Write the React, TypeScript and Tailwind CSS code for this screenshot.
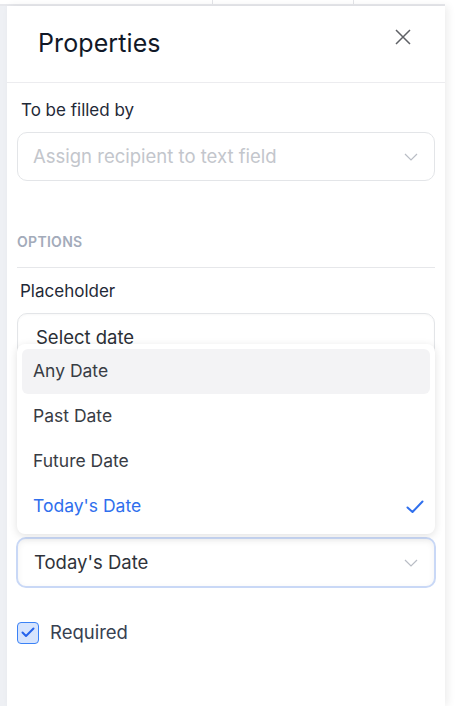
import { useState } from "react";

const font = { fontFamily: "Inter, 'Noto Sans', sans-serif" };

function Chevron() {
  return (
    <svg width="14" height="8" viewBox="0 0 14 8" fill="none">
      <polyline points="1,1 7,7 13,1" stroke="#b9bdc5" strokeWidth="1.2" />
    </svg>
  );
}

const options = ["Any Date", "Past Date", "Future Date", "Today's Date"];

export default function App() {
  const [selected] = useState("Today's Date");

  return (
    <div className="w-[460px] h-[706px] bg-white overflow-hidden flex flex-col" style={font}>
      <div className="h-[4px] w-[445px] flex">
        <div className="w-[213px] border-r border-[#e3e4e8]" />
        <div className="w-[141px] border-r border-[#e3e4e8]" />
      </div>
      <div className="h-[2px] w-[445px] bg-[#e7e8ec]" />
      <div className="flex flex-1">
        <div className="w-[7px] bg-[#eef0f4]" />
        <div className="w-[438px] bg-white shadow-[3px_0_8px_rgba(0,0,0,0.07)] flex flex-col">
          <div className="h-[77px] border-b border-[#ececef] flex items-center justify-between pl-[31px] pr-[34px]">
            <h2 className="text-[25px] text-[#111827] tracking-[0.1px]">Properties</h2>
            <svg width="16" height="16" viewBox="0 0 16 16" className="-mt-[14px]">
              <path d="M1 1L15 15M15 1L1 15" stroke="#5f6166" strokeWidth="1.5" />
            </svg>
          </div>

          <div className="px-[10px] pt-[15px] flex flex-col">
            <label className="pl-[4px] text-[17px] leading-[24px] text-[#1f2937]">To be filled by</label>
            <div className="mt-[10px] h-[49px] rounded-[10px] border border-[#e3e5e8] flex items-center justify-between pl-[15px] pr-[16px]">
              <span className="text-[18.5px] text-[#c3c6cc]">Assign recipient to text field</span>
              <Chevron />
            </div>

            <div className="mt-[51px] text-[14px] leading-[20px] font-semibold text-[#a3abba] tracking-[0.3px]">OPTIONS</div>
            <div className="mt-[15px] border-t border-[#e6e7ea]" />

            <label className="mt-[11px] pl-[3px] text-[17px] leading-[24px] text-[#1f2937]">Placeholder</label>
            <div className="relative mt-[10px]">
              <div className="h-[50px] rounded-[10px] border border-[#e3e5e8] flex items-start pl-[18px] pt-[10px] shadow-[inset_0_1px_2px_rgba(0,0,0,0.03)]">
                <span className="text-[18.5px] text-[#2b2f36]">Select date</span>
              </div>
              <ul className="absolute left-0 right-0 top-[31px] z-10 bg-white rounded-[8px] p-[5px] shadow-[0_2px_8px_rgba(0,0,0,0.12)]">
                {options.map((o, i) => {
                  const active = o === selected;
                  return (
                    <li
                      key={o}
                      className={`h-[45px] rounded-[6px] flex items-center justify-between pl-[11px] pr-[6px] text-[17.5px] ${
                        i === 0 ? "bg-[#f3f3f5]" : ""
                      } ${active ? "text-[#2f6fed]" : "text-[#383c44]"}`}
                    >
                      <span>{o}</span>
                      {active && (
                        <svg width="18" height="14" viewBox="0 0 18 14" fill="none">
                          <polyline points="1.5,7.5 6.5,12 16.5,1.5" stroke="#2f6fed" strokeWidth="2" strokeLinecap="round" strokeLinejoin="round" />
                        </svg>
                      )}
                    </li>
                  );
                })}
              </ul>
            </div>

            <div className="mt-[174px] -mx-[1px] h-[51px] rounded-[10px] border-2 border-[#c9d8f6] flex items-center justify-between pl-[16px] pr-[16px] shadow-[inset_0_2px_6px_rgba(0,0,0,0.06)]">
              <span className="text-[18.5px] text-[#2f333a]">{selected}</span>
              <Chevron />
            </div>

            <label className="mt-[31px] flex items-center gap-[11px]">
              <span className="w-[22px] h-[22px] rounded-[4px] border border-[#3b82f6] bg-[#d6e4fd] flex items-center justify-center">
                <svg width="14" height="11" viewBox="0 0 14 11" fill="none">
                  <polyline points="1.5,5.5 5,9 12.5,1.5" stroke="#2563eb" strokeWidth="2" strokeLinecap="round" strokeLinejoin="round" />
                </svg>
              </span>
              <span className="text-[18.5px] text-[#374151]">Required</span>
            </label>
          </div>
        </div>
      </div>
    </div>
  );
}
